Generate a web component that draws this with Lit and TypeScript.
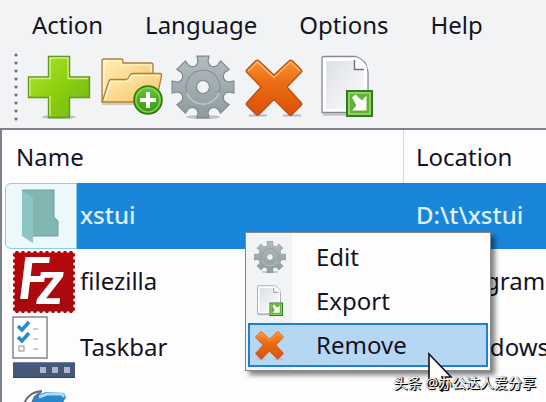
import { LitElement, html, svg, css } from "lit";
import { customElement, property, state } from "lit/decorators.js";
import { classMap } from "lit/directives/class-map.js";

type IconName =
  | "add" | "new-folder" | "settings" | "remove" | "export"
  | "folder" | "filezilla" | "taskbar" | "tool";

/** Outline of a cog with eight flared teeth, centred on 32,32. */
function cogPath(): string {
  const at = (r: number, deg: number) => {
    const a = (deg * Math.PI) / 180;
    return `${(32 + r * Math.cos(a)).toFixed(1)} ${(32 + r * Math.sin(a)).toFixed(1)}`;
  };
  let d = "";
  for (let i = 0; i < 8; i++) {
    const t = i * 45;
    d += `${i ? "L" : "M"}${at(24, t - 14)} L${at(26, t - 11)} L${at(31.5, t - 11)} L${at(31.5, t + 11)} L${at(26, t + 11)} L${at(24, t + 14)} Q${at(21, t + 22.5)} ${at(24, t + 31)} `;
  }
  return d + "Z";
}

/** Perforated edge of the stamp, one scallop every six units. */
function stampHoles() {
  const out = [];
  for (let i = 0; i <= 10; i++) {
    const p = 2 + i * 6;
    out.push(svg`<circle cx=${p} cy="1" r="1.8"/><circle cx=${p} cy="63" r="1.8"/>
      <circle cx="1" cy=${p} r="1.8"/><circle cx="63" cy=${p} r="1.8"/>`);
  }
  return out;
}

const ICONS: Record<IconName, () => unknown> = {
  add: () => svg`
    <defs><linearGradient id="g" x1="0" y1="0" x2="1" y2="1">
      <stop offset="0" stop-color="#b4e03a"/><stop offset=".5" stop-color="#8ed00c"/><stop offset="1" stop-color="#6fb520"/>
    </linearGradient></defs>
    <ellipse cx="32" cy="62" rx="17" ry="2" fill="#b9c2c0"/>
    <path d="M21.500 1.500H42.500V22H62.500V42.500H42.500V62.500H21.500V42.500H1.500V22H21.500Z" fill="url(#g)" stroke="#5d9a22" stroke-width="1.400"/>
    <path d="M23 41V61M3 41V23.500H23V3H41V23.500H61" fill="none" stroke="#d4f07a" stroke-width="1.300"/>`,
  "new-folder": () => svg`
    <defs>
      <linearGradient id="g" x1="0" y1="0" x2="1" y2="1"><stop offset="0" stop-color="#fff0b8"/><stop offset="1" stop-color="#f4c265"/></linearGradient>
      <linearGradient id="h" x1="0" y1="0" x2="0" y2="1"><stop offset="0" stop-color="#6cc832"/><stop offset="1" stop-color="#379315"/></linearGradient>
    </defs>
    <path d="M3 6Q3 4 5 4H22Q24 4 24 6V8H52Q54 8 54 10V46H3Z" fill="url(#g)" stroke="#a8804a" stroke-width="1.300"/>
    <path d="M5 44V6H22V10H52V17" fill="none" stroke="#fff6d4" stroke-width="1.200"/>
    <path d="M3 47L10 26Q10.500 24.500 12 24.500H27Q29 24.500 30 22L31 20Q32 18.500 34 18.500H61.500Q63 18.500 62.500 21L57 47Z" fill="url(#g)" stroke="#a8804a" stroke-width="1.300"/>
    <path d="M6 45L12 26.500H28Q30 26 31.500 22L33 20.500H60" fill="none" stroke="#fff8dc" stroke-width="1.200"/>
    <path d="M3 49H36" stroke="#d9c6a6" stroke-width="2"/>
    <circle cx="49" cy="45" r="14" fill="url(#h)" stroke="#2f7a16" stroke-width="1.600"/>
    <circle cx="49" cy="45" r="12" fill="none" stroke="#8edb56" stroke-width="1.200"/>
    <path d="M49 37V53M41 45H57" stroke="#fff" stroke-width="4"/>`,
  settings: () => svg`
    <defs><linearGradient id="g" x1="0" y1="0" x2="0" y2="1"><stop offset="0" stop-color="#b3bcc0"/><stop offset="1" stop-color="#8f9b9f"/></linearGradient></defs>
    <ellipse cx="32" cy="62" rx="17" ry="2" fill="#bcc4c6"/>
    <path fill-rule="evenodd" d="${cogPath()}M38.500 32a6.500 6.500 0 1 0-13 0a6.500 6.500 0 1 0 13 0Z" fill="url(#g)" stroke="#7d898d" stroke-width="1.200"/>
    <path d="M16 38A17 17 0 1 1 48 38" fill="none" stroke="#849094" stroke-width="1.200"/>
    <path d="M16 38A17 17 0 0 0 48 38" fill="none" stroke="#bec8cb" stroke-width="1.400"/>`,
  remove: () => svg`
    <defs><linearGradient id="g" x1="0" y1="0" x2="0" y2="1"><stop offset="0" stop-color="#fb9332"/><stop offset=".4" stop-color="#ea6d14"/><stop offset="1" stop-color="#dc4f0a"/></linearGradient></defs>
    <path d="M6 60.500H24M40 60.500H58" stroke="#b5bbbd" stroke-width="2"/>
    <path d="M13 5.500Q14.500 4.500 16 6L31 20L46 6Q47.500 4.500 49 5.500L58 14.500Q59.500 16 58 17.500L44 32L58 47.500Q59.500 49 58 50.500L49 59.500Q47.500 61 46 59.500L31 44.500L16 59.500Q14.500 61 13 59.500L4 50.500Q2.500 49 4 47.500L18 32L4 17.500Q2.500 16 4 14.500Z" fill="url(#g)" stroke="#b5511a" stroke-width="1.300"/>
    <path d="M5 16L14.500 7L31 22.500L47.500 7L57 16" fill="none" stroke="#ffb565" stroke-width="1.300"/>`,
  export: () => svg`
    <defs>
      <linearGradient id="g" x1="0" y1="0" x2="1" y2="1"><stop offset="0" stop-color="#dde0e4"/><stop offset="1" stop-color="#fdfdfe"/></linearGradient>
    </defs>
    <path d="M8 59.500H52" stroke="#bfc4c7" stroke-width="2.500"/>
    <path d="M9 1.500H41Q52 5 53 17V57.500H7V3.500Q7 1.500 9 1.500Z" fill="#fff" stroke="#858a92" stroke-width="1.300"/>
    <path d="M11 6H38L49 18V54H11Z" fill="url(#g)"/>
    <path d="M39.500 2Q51 6 52.500 14.500H39.500Z" fill="#fff"/>
    <path d="M39.500 5V14.500H49" fill="none" stroke="#6f747c" stroke-width="1.500"/>
    <rect x="32" y="36" width="25" height="25" fill="#62b13a" stroke="#2f7d1c" stroke-width="2"/>
    <rect x="34" y="38" width="21" height="21" fill="none" stroke="#a3dc6c" stroke-width="1.500"/>
    <path d="M37 42.500L40.500 39.500L47 45.500L51.500 40.500V55.500H37L41.500 50.500Z" fill="#fff"/>`,
  folder: () => svg`
    <path d="M10 6H42V33L46 37V52H10Z" fill="#80b5b1"/>
    <path d="M10 6L21 14V59L10 52Z" fill="#8dc4c4"/>
    <path d="M10 6H42V33L46 37V52H21" fill="none" stroke="#6ba09e"/>`,
  filezilla: () => svg`
    <defs><linearGradient id="g" x1="0" y1="0" x2="0" y2="1"><stop offset="0" stop-color="#b8080c"/><stop offset="1" stop-color="#a30a0e"/></linearGradient></defs>
    <rect x="1" y="1" width="62" height="62" fill="url(#g)"/>
    <g fill="#fdfdfe">${stampHoles()}</g>
    <text class="logo-f" x="6" y="49">F</text>
    <text class="logo-z" x="25" y="54">z</text>`,
  taskbar: () => svg`
    <rect x="1" y="1" width="34" height="41" fill="#fff" stroke="#85858d" stroke-width="1.500"/>
    <path d="M6 10L10 14L17 6M6 21L10 25L17 17" fill="none" stroke="#2789cf" stroke-width="3.500"/>
    <rect x="7" y="30" width="5" height="5" fill="#fff" stroke="#8b8b8b"/>
    <path d="M21 13H26M21 23H26M21 33H26" stroke="#9a9a9a"/>
    <rect x="1" y="46" width="62" height="16" fill="#46587a"/>
    <path d="M1 46.500H63" stroke="#7181a0"/><path d="M1 61.500H63" stroke="#33415e"/>
    <path d="M28 54H34M40 54H46M52 54H58" stroke="#aab8cf" stroke-width="6"/>`,
  tool: () => svg`
    <path d="M11 26Q14 10 30 9" fill="none" stroke="#606a76" stroke-width="2"/>
    <path d="M22 14L34 10L52 11L54 15L47 28H16Z" fill="#2787cf"/>
    <path d="M27 15L35 12H50L52 15" fill="none" stroke="#a9dcf4" stroke-width="3"/>
    <path d="M18 24L25 13L29 10" fill="none" stroke="#5e7487" stroke-width="2"/>`,
};

@customElement("app-icon")
class AppIcon extends LitElement {
  @property() name: IconName = "add";

  static styles = css`
    :host { display: block; flex: none; width: 64px; height: 64px; }
    svg { display: block; width: 100%; height: 100%; }
    .logo-f, .logo-z { fill: #fff; font-family: Lato, "Liberation Sans", sans-serif; font-weight: bold; font-style: italic; }
    .logo-f { font-size: 58px; }
    .logo-z { font-size: 62px; }
  `;

  render() {
    return html`<svg viewBox="0 0 64 64" aria-hidden="true">${ICONS[this.name]()}</svg>`;
  }
}

interface Entry { name: string; location: string; icon: IconName; }

@customElement("app-root")
class AppRoot extends LitElement {
  @state() private selected = 0;
  @state() private hovered = 2;

  private menus = ["Action", "Language", "Options", "Help"];

  private tools: { label: string; icon: IconName }[] = [
    { label: "Add", icon: "add" },
    { label: "Add folder", icon: "new-folder" },
    { label: "Edit", icon: "settings" },
    { label: "Remove", icon: "remove" },
    { label: "Export", icon: "export" },
  ];

  private entries: Entry[] = [
    { name: "xstui", location: "D:\\t\\xstui", icon: "folder" },
    { name: "filezilla", location: "C:\\Program Files", icon: "filezilla" },
    { name: "Taskbar", location: "C:\\Windows", icon: "taskbar" },
    { name: "", location: "", icon: "tool" },
  ];

  private actions: { label: string; icon: IconName }[] = [
    { label: "Edit", icon: "settings" },
    { label: "Export", icon: "export" },
    { label: "Remove", icon: "remove" },
  ];

  static styles = css`
    :host {
      display: flex; flex-direction: column; position: relative;
      height: 100vh; overflow: hidden; background: #f1f3f5; color: #15131f;
      font: 24px/32px "Noto Sans", "Open Sans", sans-serif;
    }
    * { box-sizing: border-box; }
    button { font: inherit; color: inherit; background: none; border: 0; margin: 0; padding: 0; text-align: left; }
    .menubar { display: flex; gap: 42px; padding: 9px 32px; }
    .toolbar { display: flex; align-items: center; gap: 8px; padding: 3px 14px 7px; }
    .grip {
      width: 4px; height: 68px; margin-right: 1px;
      background: radial-gradient(circle at 2px 2px, #6d717c 1px, transparent 2px) 0 0 / 4px 8px;
    }
    .list { flex: 1; min-height: 0; overflow: hidden; background: #fdfdfe; border-top: 2px solid #7c8090; border-left: 2px solid #7c8090; }
    table { width: 100%; table-layout: fixed; border-collapse: separate; border-spacing: 0; }
    .location-col { width: 143px; }
    th { height: 53px; padding: 0 14px; font-weight: normal; text-align: left; }
    th + th { border-left: 1px solid #d5d8dc; padding: 0 0 0 12px; }
    td { height: 66px; padding: 0 0 2px 13px; white-space: nowrap; }
    td:first-child { padding: 0 3px; }
    .entry { display: flex; align-items: center; gap: 3px; height: 66px; }
    .entry span { padding-bottom: 2px; }
    .thumb { width: 72px; height: 66px; padding: 0 0 2px 6px; border: 1px solid transparent; border-radius: 6px 0 0 6px; }
    .selected td { background: #1a86d9; color: #dff1fc; font-weight: 500; }
    .selected td:first-child { background: linear-gradient(90deg, #fdfdfe 9px, #1a86d9 9px); }
    .selected .thumb { background: #edf8fb; border-color: #8fcfe6; }

    .context {
      position: absolute; left: 245px; top: 232px; width: 246px; padding: 2px 2px 3px;
      border: 1px solid #85898f; box-shadow: 4px 4px 5px rgba(0, 0, 0, 0.5);
      background: linear-gradient(90deg, #f1f3f5 46px, #fdfdfe 46px);
    }
    .item { display: flex; align-items: center; gap: 30px; width: 100%; height: 44px; padding: 0 4px; border: 2px solid transparent; }
    .item app-icon { width: 32px; height: 32px; }
    .item.hovered { background: #b6d7f4; border-color: #2180cc; }
    .pointer { position: absolute; left: 427px; top: 352px; width: 28px; height: 42px; }
    .credit {
      position: absolute; right: 10px; bottom: 8px; color: #fff;
      font: 14px/22px "Noto Sans", "Noto Sans CJK SC", sans-serif;
      text-shadow: 1px 1px 1px #000, 1px 1px 0 #222, 0 0 1px #333;
    }
  `;

  render() {
    return html`
      <nav class="menubar">${this.menus.map((m) => html`<button>${m}</button>`)}</nav>
      <div class="toolbar" role="toolbar">
        <span class="grip"></span>
        ${this.tools.map((t) => html`<button aria-label=${t.label}><app-icon name=${t.icon}></app-icon></button>`)}
      </div>
      <main class="list">
        <table>
          <colgroup><col /><col class="location-col" /></colgroup>
          <thead><tr><th>Name</th><th>Location</th></tr></thead>
          <tbody>
            ${this.entries.map((e, i) => html`
              <tr class=${classMap({ selected: i === this.selected })} @click=${() => (this.selected = i)}>
                <td><div class="entry"><div class="thumb"><app-icon name=${e.icon}></app-icon></div><span>${e.name}</span></div></td>
                <td>${e.location}</td>
              </tr>`)}
          </tbody>
        </table>
      </main>
      <div class="context" role="menu">
        ${this.actions.map((a, i) => html`
          <button role="menuitem" class=${classMap({ item: true, hovered: i === this.hovered })}
            @mouseenter=${() => (this.hovered = i)}>
            <app-icon name=${a.icon}></app-icon><span>${a.label}</span>
          </button>`)}
      </div>
      <svg class="pointer" viewBox="0 0 28 42" aria-hidden="true">
        <path d="M2 2V34L9 27L15 39L20 36L15 25H24Z" fill="#fff" stroke="#15131f" stroke-width="1.600"/>
      </svg>
      <div class="credit">头条 @办公达人爱分享</div>
    `;
  }
}
